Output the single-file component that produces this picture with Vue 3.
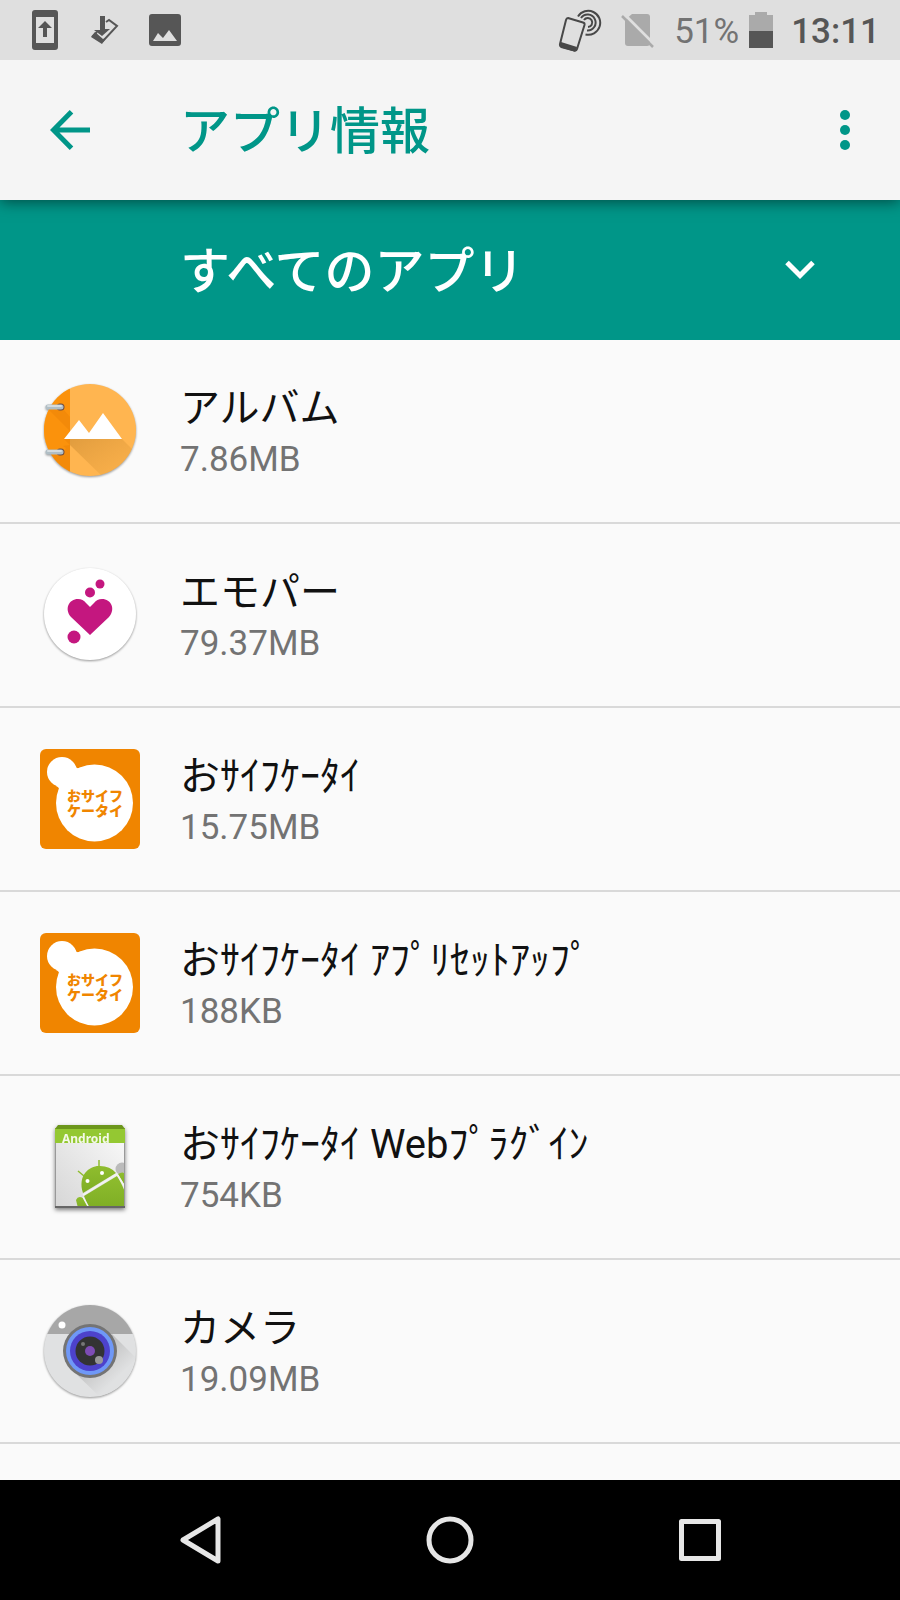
<script setup>
import { ref } from 'vue'

const filter = ref('all')
const apps = [
  { id: 1, name: 'アルバム', size: '7.86MB', icon: 'album' },
  { id: 2, name: 'エモパー', size: '79.37MB', icon: 'emopa' },
  { id: 3, name: 'おｻｲﾌｹｰﾀｲ', size: '15.75MB', icon: 'osaifu' },
  { id: 4, name: 'おｻｲﾌｹｰﾀｲ ｱﾌﾟﾘｾｯﾄｱｯﾌﾟ', size: '188KB', icon: 'osaifu' },
  { id: 5, name: 'おｻｲﾌｹｰﾀｲ Webﾌﾟﾗｸﾞｲﾝ', size: '754KB', icon: 'android' },
  { id: 6, name: 'カメラ', size: '19.09MB', icon: 'camera' },
]
</script>

<template>
  <div class="screen">
    <div class="status-bar">
      <div class="notifications">
        <svg viewBox="0 0 60 60">
          <path fill-rule="evenodd" d="M20 10h20q3 0 3 3v34q0 3-3 3H20q-3 0-3-3V13q0-3 3-3zM21 17v26h18V17z" />
          <path d="M30 21l7 7h-5v9h-4v-9h-5z" />
        </svg>
        <svg viewBox="0 0 60 60">
          <path fill="none" stroke="#565656" stroke-width="2" d="M31 22l3-2 8 6-14 15-10-5 4-4" />
          <path d="M16 37l4-5 8 7 3-1-4 6zM25 16h5v13h5l-8 7-8-6h6z" />
        </svg>
        <svg viewBox="0 0 60 60">
          <path fill-rule="evenodd" d="M17 14h26q3 0 3 3v26q0 3-3 3H17q-3 0-3-3V17q0-3 3-3zM18 41h24l-8-11-6 8-5-5z" />
        </svg>
      </div>
      <div class="system">
        <svg class="nfc" viewBox="0 0 44 60">
          <g fill="none" stroke="#484848" stroke-width="2">
            <path d="M10 18l15 4.500q2 .6 1.500 2.500L19 49q-.6 2-2.500 1.500L3.500 46.500Q1.500 46 2 44L8 20q.5-2 2-2z" />
            <path d="M20 16.500A12 12 0 1 1 27.500 34.500" />
            <path d="M23 18A8 8 0 1 1 29 30.500" />
            <path d="M26 20A4.500 4.500 0 1 1 30 27" />
          </g>
          <path fill="#484848" d="M3 42l16 5-1 4q-1 1-2 .5L3 48q-2-1-1-3z" />
        </svg>
        <svg class="sim" viewBox="0 0 34 60">
          <path fill="#aaa" d="M12 14h15q3 0 3 3v26q0 3-3 3H8q-3 0-3-3V20z" />
          <path stroke="#dfdfdf" stroke-width="3" d="M4 14l30 30" />
          <path stroke="#aaa" stroke-width="2.500" d="M2 16l31 31" />
        </svg>
        <span class="percent">51%</span>
        <svg class="battery" viewBox="0 0 24 60">
          <path fill="#aaa" d="M0 15h6v-3h12v3h6v16H0z" />
          <path d="M0 31h24v17H0z" />
        </svg>
        <span class="clock">13:11</span>
      </div>
    </div>

    <header class="toolbar">
      <button class="back" aria-label="戻る">
        <svg width="40" height="40" viewBox="0 0 40 40">
          <path fill="none" stroke="#009688" stroke-width="5" d="M21.500 1.800L3.500 20l18 18.200M3 20h37" />
        </svg>
      </button>
      <h1>アプリ情報</h1>
      <button class="more" aria-label="その他">
        <svg width="10" height="40" viewBox="0 0 10 40">
          <g fill="#009688">
            <circle cx="5" cy="5" r="5" />
            <circle cx="5" cy="20" r="5" />
            <circle cx="5" cy="35" r="5" />
          </g>
        </svg>
      </button>
    </header>

    <div class="filter">
      <select v-model="filter" aria-label="表示するアプリ">
        <option value="all">すべてのアプリ</option>
      </select>
      <svg class="chevron" width="30" height="20" viewBox="0 0 30 20">
        <path fill="none" stroke="#fff" stroke-width="5" d="M2 2.500l13 13 13-13" />
      </svg>
    </div>

    <ul class="app-list">
      <li v-for="app in apps" :key="app.id">
        <button class="app">
          <svg v-if="app.icon === 'album'" class="icon round" viewBox="0 0 100 100">
            <defs>
              <clipPath id="albumClip"><circle cx="50" cy="49" r="46" /></clipPath>
              <linearGradient id="albumShade" x1="0" y1="0" x2="1" y2="1">
                <stop offset="0" stop-color="#d08f35" stop-opacity=".65" />
                <stop offset="1" stop-color="#f0a63f" stop-opacity=".2" />
              </linearGradient>
            </defs>
            <g clip-path="url(#albumClip)">
              <path fill="#ffb550" d="M0 0h100v100H0z" />
              <path fill="#fb920c" d="M0 0h30v100H0z" />
              <path fill="#ec8106" d="M8 28h15l7 8v22h-6l6 6v31L8 73h15l3-6-3-2 7-1V50z" opacity=".5" />
              <path fill="url(#albumShade)" d="M30 58h52l18 18v24H67L30 64z" />
            </g>
            <path fill="#fff" d="M24 58l15-19 10 13 14-20 19 26z" />
            <g fill="none" stroke-linecap="round">
              <path stroke="#6d4c41" stroke-width="7" d="M20 26h1M20 71h1" />
              <path stroke="#b0bec5" stroke-width="5" d="M8 26h13M8 71h13" />
              <path stroke="#d3dbdf" stroke-width="2" d="M8 25h13M8 70h13" />
            </g>
          </svg>

          <svg v-else-if="app.icon === 'emopa'" class="icon round" viewBox="0 0 100 100">
            <circle cx="50" cy="49" r="46" fill="#fff" />
            <g fill="#c4177f">
              <path d="M50 70L31 52C24 44 29 34 38 34q5 0 8 4l4 4 4-4q3-4 8-4c9 0 14 10 7 18z" />
              <circle cx="60" cy="19" r="4.500" />
              <circle cx="50" cy="27.500" r="5" />
              <circle cx="34" cy="72" r="6.500" />
            </g>
          </svg>

          <svg v-else-if="app.icon === 'osaifu'" class="icon" viewBox="0 0 100 100">
            <rect width="100" height="100" rx="6" fill="#f08500" />
            <g fill="#fff">
              <circle cx="22" cy="23" r="15" />
              <circle cx="54.500" cy="54" r="38.500" />
              <path d="M35 17q2 4 6 1L20 42q0-3-4-5z" />
            </g>
            <g class="logo-text" fill="#f08500">
              <text x="27" y="52">おサイフ</text>
              <text x="27" y="67">ケータイ</text>
            </g>
          </svg>

          <svg v-else-if="app.icon === 'android'" class="icon boxed" viewBox="0 0 100 100">
            <defs>
              <linearGradient id="paper" x1="1" y1="0" x2="0" y2="1">
                <stop offset="0" stop-color="#fafafa" />
                <stop offset="1" stop-color="#d6d6d6" />
              </linearGradient>
              <linearGradient id="robot" x1="0" y1="0" x2="0" y2="1">
                <stop offset="0" stop-color="#8fbd2e" />
                <stop offset="1" stop-color="#7fae25" />
              </linearGradient>
              <clipPath id="boxClip"><path d="M15 8h70v82H15z" /></clipPath>
            </defs>
            <path fill="url(#paper)" d="M15 12h70v79H15z" />
            <path fill="#94c832" d="M15 11h70v15H15z" />
            <path fill="#6c961b" d="M18 8h64l3 4H15z" />
            <text class="box-text" x="22" y="26" fill="#f4f9e8">Android</text>
            <g clip-path="url(#boxClip)">
              <circle cx="82" cy="52" r="6.500" fill="#bbb" />
              <g fill="url(#robot)">
                <path d="M43 76C37 57 51 48 60 49q10 0 16 7z" />
                <path d="M44 79l33-20q4 6 8 16v16H49z" />
                <path d="M78 57q5-3 7 0v12z" />
                <path d="M36 83q2-5 7-2l6 10H38z" />
              </g>
              <path fill="none" stroke="#8fbd2e" stroke-width="1.500" d="M59 43v7M38 54l6 5" />
              <path fill="none" stroke="#f3f3f3" stroke-width="1.500" d="M43 78l34-21 8 13M43 80l6 11" />
              <circle cx="47.500" cy="64" r="2" fill="#fff" />
              <circle cx="62" cy="56" r="2" fill="#fff" />
            </g>
            <path fill="none" stroke="#999" d="M15.500 26v64.500h69V26" />
            <path stroke="#666" stroke-width="2" d="M15 90h70" />
          </svg>

          <svg v-else class="icon round" viewBox="0 0 100 100">
            <defs>
              <clipPath id="cameraClip"><circle cx="50" cy="50" r="46" /></clipPath>
              <linearGradient id="lensShade" x1="0" y1="0" x2="1" y2="1">
                <stop offset=".2" stop-color="#b4b4b4" />
                <stop offset=".7" stop-color="#e0e1e2" />
              </linearGradient>
            </defs>
            <g clip-path="url(#cameraClip)">
              <path fill="#e0e1e2" d="M0 0h100v100H0z" />
              <path fill="url(#lensShade)" d="M72 33l25 25v38H60L31 68z" />
              <path fill="#a7a7a7" d="M0 0h100v33H0z" />
            </g>
            <circle cx="22" cy="24" r="3.500" fill="#fff" />
            <circle cx="50" cy="50" r="27" fill="#747474" />
            <circle cx="50" cy="50" r="24" fill="#6f98f7" />
            <circle cx="50" cy="50" r="20" fill="#4d42cb" />
            <circle cx="50" cy="50" r="14.500" fill="#333" />
            <circle cx="50" cy="50" r="5" fill="#7e4cb5" />
            <circle cx="43" cy="43" r="2" fill="#777" />
            <circle cx="59" cy="59" r="4" fill="#999" />
          </svg>

          <span class="info">
            <span class="name">{{ app.name }}</span>
            <span class="size">{{ app.size }}</span>
          </span>
        </button>
      </li>
    </ul>

    <nav class="nav-bar">
      <button aria-label="戻る">
        <svg viewBox="0 0 50 50">
          <path d="M43 4v42L8 25z" />
        </svg>
      </button>
      <button aria-label="ホーム">
        <svg viewBox="0 0 50 50">
          <circle cx="25" cy="25" r="21" />
        </svg>
      </button>
      <button aria-label="履歴">
        <svg viewBox="0 0 50 50">
          <rect x="6.500" y="6.500" width="37" height="37" />
        </svg>
      </button>
    </nav>
  </div>
</template>

<style>
body {
  margin: 0;
  background: #fafafa;
}
</style>

<style scoped>
.screen {
  display: flex;
  flex-direction: column;
  height: 100vh;
  font-family: Roboto, 'Noto Sans CJK JP', sans-serif;
  background: #fafafa;
}

button {
  padding: 0;
  border: 0;
  background: none;
  font: inherit;
  color: inherit;
  cursor: pointer;
}

svg {
  display: block;
  flex-shrink: 0;
}

.status-bar {
  position: relative;
  z-index: 2;
  display: flex;
  flex-shrink: 0;
  justify-content: space-between;
  height: 60px;
  padding: 0 20px 0 15px;
  background: #dfdfdf;
  fill: #565656;
}

.notifications,
.system {
  display: flex;
  align-items: center;
}

.notifications svg {
  width: 60px;
  height: 60px;
}

.system {
  font-size: 35px;
  line-height: 60px;
}

.system svg {
  height: 60px;
}

.system span {
  padding-top: 4px;
}

.nfc {
  width: 44px;
  margin-right: 18px;
}

.sim {
  width: 34px;
  margin-right: 20px;
}

.percent {
  margin-right: 10px;
  color: #737373;
}

.battery {
  width: 24px;
  margin-right: 18px;
}

.clock {
  font-weight: 500;
  color: #565656;
}

.toolbar {
  position: relative;
  z-index: 1;
  display: flex;
  flex-shrink: 0;
  align-items: center;
  height: 140px;
  background: #f5f5f5;
  box-shadow: 0 2px 14px rgba(0, 0, 0, .5);
  color: #009688;
}

.back {
  display: flex;
  justify-content: center;
  width: 140px;
}

.toolbar h1 {
  flex: 1;
  margin: 0;
  padding: 4px 0 0 40px;
  font-size: 50px;
  font-weight: 500;
  line-height: 60px;
}

.more {
  display: flex;
  justify-content: center;
  width: 110px;
}

.filter {
  display: grid;
  flex-shrink: 0;
  align-items: center;
  height: 140px;
  background: #009688;
}

.filter select {
  grid-area: 1 / 1;
  width: 100%;
  height: 100%;
  padding: 4px 120px 0 180px;
  border: 0;
  appearance: none;
  background: none;
  font: inherit;
  font-size: 50px;
  font-weight: 500;
  color: #fff;
}

.chevron {
  grid-area: 1 / 1;
  justify-self: end;
  margin-right: 85px;
  pointer-events: none;
}

.app-list {
  flex: 1;
  min-height: 0;
  margin: 0;
  padding: 0;
  overflow: hidden;
  list-style: none;
}

.app-list li {
  border-bottom: 2px solid #d9d9d9;
}

.app {
  display: flex;
  align-items: center;
  gap: 40px;
  width: 100%;
  padding: 41px 40px;
  text-align: left;
}

.icon {
  width: 100px;
  height: 100px;
}

.icon.round {
  filter: drop-shadow(0 1px 1px rgba(0, 0, 0, .4));
}

.icon.boxed {
  filter: drop-shadow(0 2px 2px rgba(0, 0, 0, .5));
}

.logo-text {
  font-size: 14px;
  font-weight: 900;
}

.box-text {
  font-family: 'Noto Sans', sans-serif;
  font-size: 12px;
  font-weight: 700;
}

.info {
  display: flex;
  flex-direction: column;
}

.name {
  font-size: 40px;
  line-height: 56px;
  color: #111;
}

.size {
  padding-top: 2px;
  font-size: 35px;
  line-height: 42px;
  color: #737373;
}

.nav-bar {
  display: grid;
  flex-shrink: 0;
  grid-template-columns: repeat(3, 1fr);
  height: 120px;
  padding: 0 75px;
  background: #000;
}

.nav-bar button {
  display: flex;
  align-items: center;
  justify-content: center;
}

.nav-bar svg {
  width: 50px;
  height: 50px;
  fill: none;
  stroke: #e6e6e6;
  stroke-width: 5;
  stroke-linejoin: round;
}
</style>
